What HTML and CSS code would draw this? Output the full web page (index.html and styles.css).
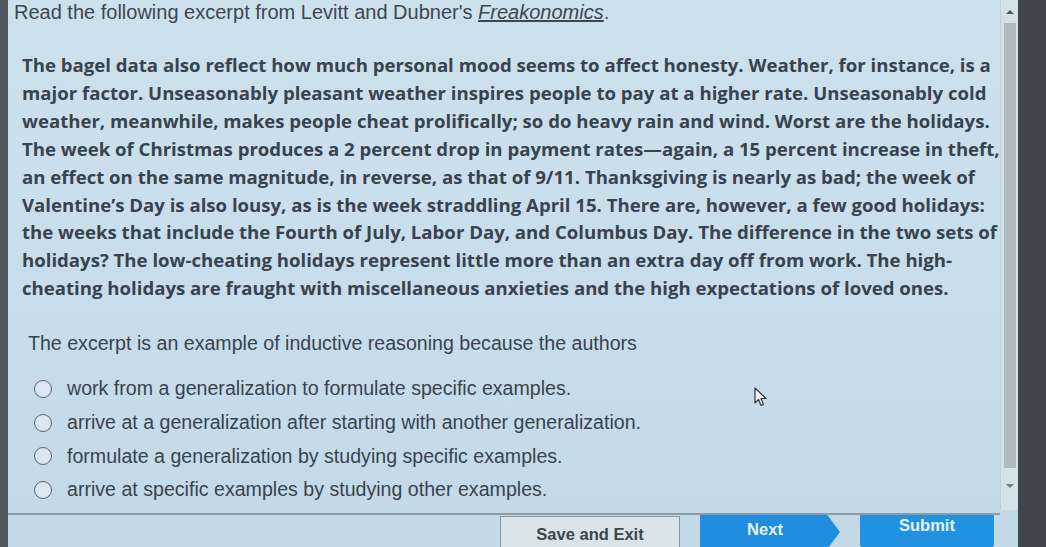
FILE: index.html
```html
<!DOCTYPE html>
<html>
<head>
<meta charset="utf-8">
<link rel="stylesheet" href="styles.css">
</head>
<body>
<div class="screen">
  <div class="edge"></div>
  <div class="pane">
    <div class="scroll">
      <p class="intro">Read the following excerpt from Levitt and Dubner's <span class="title">Freakonomics</span>.</p>
      <p class="excerpt">The bagel data also reflect how much personal mood seems to affect honesty. Weather, for instance, is a<br>major factor. Unseasonably pleasant weather inspires people to pay at a higher rate. Unseasonably cold<br>weather, meanwhile, makes people cheat prolifically; so do heavy rain and wind. Worst are the holidays.<br>The week of Christmas produces a 2 percent drop in payment rates—again, a 15 percent increase in theft,<br>an effect on the same magnitude, in reverse, as that of 9/11. Thanksgiving is nearly as bad; the week of<br>Valentine’s Day is also lousy, as is the week straddling April 15. There are, however, a few good holidays:<br>the weeks that include the Fourth of July, Labor Day, and Columbus Day. The difference in the two sets of<br>holidays? The low-cheating holidays represent little more than an extra day off from work. The high-<br>cheating holidays are fraught with miscellaneous anxieties and the high expectations of loved ones.</p>
      <p class="question">The excerpt is an example of inductive reasoning because the authors</p>
      <ul class="options">
        <li><span class="radio"></span>work from a generalization to formulate specific examples.</li>
        <li><span class="radio"></span>arrive at a generalization after starting with another generalization.</li>
        <li><span class="radio"></span>formulate a generalization by studying specific examples.</li>
        <li><span class="radio"></span>arrive at specific examples by studying other examples.</li>
      </ul>
      <svg class="cursor" width="14" height="20" viewBox="0 0 14 20"><path d="M1 1 L1 16 L4.5 12.5 L7 18.5 L9.5 17.5 L7 11.5 L12 11.5 Z" fill="#eef4f8" stroke="#2f3840" stroke-width="1.2" stroke-linejoin="round"/></svg>
    </div>
    <div class="footer">
      <button class="btn save">Save and Exit</button>
      <button class="btn next">Next</button>
      <button class="btn submit">Submit</button>
    </div>
  </div>
  <div class="scrollbar">
    <div class="arrow up"></div>
    <div class="thumb"></div>
    <div class="arrow down"></div>
  </div>
  <div class="bezel"></div>
</div>
</body>
</html>
```
FILE: styles.css
```css
html, body {
  margin: 0;
  padding: 0;
  width: 1046px;
  height: 547px;
  overflow: hidden;
}
.screen {
  display: flex;
  width: 1046px;
  height: 547px;
  background: linear-gradient(180deg, #cde1ec 0%, #c8ddeb 55%, #c3d9e7 100%);
  font-family: "Liberation Sans", Arial, sans-serif;
  color: #3a434c;
  overflow: hidden;
}
.edge {
  width: 8px;
  background: #50575d;
}
.pane {
  flex: 1;
  display: flex;
  flex-direction: column;
  min-width: 0;
  overflow: hidden;
}
.scroll {
  position: relative;
  flex: none;
  height: 515px;
  border-bottom: 2px solid #8d9ba5;
  padding-left: 6px;
  box-sizing: border-box;
}
.intro {
  margin: 0;
  font-size: 20px;
  line-height: 22px;
  margin-top: 1px;
  color: #3e464e;
}
.title {
  font-style: italic;
  text-decoration: underline;
}
.excerpt {
  margin: 28px 0 0 8px;
  font-family: "Open Sans", sans-serif;
  font-weight: 700;
  font-size: 18.6px;
  line-height: 27.9px;
  color: #38434e;
  white-space: nowrap;
}
.question {
  margin: 30px 0 0 14px;
  font-size: 19.6px;
  line-height: 22px;
}
.options {
  list-style: none;
  margin: 18px 0 0 0;
  padding: 0 0 0 20px;
}
.options li {
  display: flex;
  align-items: center;
  gap: 15px;
  font-size: 19.6px;
  height: 33.6px;
}
.radio {
  width: 16px;
  height: 16px;
  border: 1.7px solid #5a636b;
  border-radius: 50%;
  background: #dbe8f1;
  flex: none;
}
.cursor {
  position: absolute;
  left: 746px;
  top: 387px;
}
.footer {
  flex: none;
  display: flex;
  align-items: flex-start;
  padding: 0 0 0 492px;
  gap: 20px;
}
.btn {
  font-family: "Liberation Sans", Arial, sans-serif;
  font-weight: 700;
  font-size: 16.5px;
  height: 34px;
  border: none;
  padding: 0;
  margin: 0;
}
.save {
  width: 180px;
  background: #d9e3ea;
  border: 1px solid #8a949c;
  color: #3d454d;
  margin-top: 1px;
  padding-top: 2px;
}
.next {
  width: 140px;
  background: #1f8ee0;
  color: #e8f2fb;
  clip-path: polygon(0 0, 91% 0, 100% 50%, 91% 100%, 0 100%);
  padding-right: 10px;
  padding-bottom: 6px;
}
.submit {
  width: 134px;
  background: #2191e2;
  color: #e8f2fb;
  border-radius: 2px;
  padding-bottom: 10px;
  margin-top: -2px;
}
.scrollbar {
  width: 17px;
  height: 510px;
  background: #d4e1e8;
  display: flex;
  flex-direction: column;
  align-items: center;
  border-left: 1px solid #bfccd4;
}
.arrow {
  width: 0;
  height: 0;
  border-left: 4px solid transparent;
  border-right: 4px solid transparent;
}
.up {
  margin-top: 10px;
  border-bottom: 4px solid #4e565d;
}
.thumb {
  width: 12px;
  margin-top: 9px;
  height: 445px;
  background: #aeb9c0;
}
.down {
  margin-top: 16px;
  border-top: 4px solid #6f7980;
}
.bezel {
  width: 28px;
  background: #3e454c;
}
```
